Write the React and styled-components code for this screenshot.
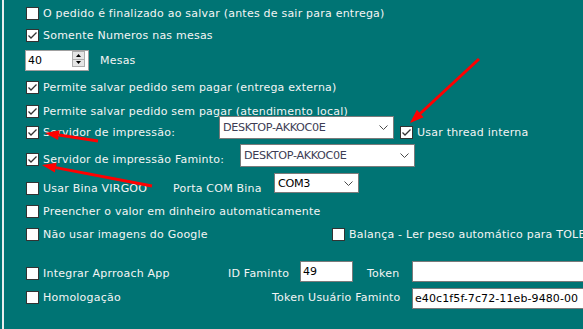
import React from "react";
import styled, { createGlobalStyle } from "styled-components";

const GlobalStyle = createGlobalStyle`
  html, body {
    margin: 0;
    padding: 0;
    background: #007474;
    overflow: hidden;
  }
  * {
    box-sizing: border-box;
  }
`;

const Page = styled.div`
  position: relative;
  width: 583px;
  height: 329px;
  padding-left: 2px;
  background: #007474;
  overflow: hidden;
  font-family: "DejaVu Sans", Verdana, sans-serif;
  font-size: 11px;
  color: #f4f4f4;
`;

const Panel = styled.div`
  height: 100%;
  border-left: 2px solid #e9eeee;
  padding-left: 22px;
  display: flex;
  flex-direction: column;
`;

const Row = styled.div`
  display: flex;
  align-items: center;
  height: ${(p) => p.$h}px;
  margin-top: ${(p) => p.$mt || 0}px;
  flex-shrink: 0;
`;

const Field = styled.label`
  display: flex;
  align-items: center;
  gap: 4px;
  width: ${(p) => (p.$w ? `${p.$w}px` : "auto")};
  flex-shrink: 0;
  white-space: nowrap;
  letter-spacing: 0.22px;
`;

const Box = styled.span`
  width: 13px;
  height: 13px;
  background: #ffffff;
  border: 1px solid #333333;
  display: inline-flex;
  align-items: center;
  justify-content: center;
  flex-shrink: 0;
`;

const Text = styled.span`
  width: ${(p) => (p.$w ? `${p.$w}px` : "auto")};
  flex-shrink: 0;
  white-space: nowrap;
  letter-spacing: 0.22px;
`;

const Combo = styled.div`
  width: ${(p) => p.$w}px;
  height: ${(p) => p.$h}px;
  margin-bottom: ${(p) => p.$mb || 0}px;
  background: #ffffff;
  border: 1px solid #7a7a7a;
  display: flex;
  align-items: center;
  justify-content: space-between;
  padding: 0 5px 0 3px;
  font-size: 11.2px;
  letter-spacing: -0.35px;
  color: ${(p) => p.$color || "#000"};
  flex-shrink: 0;
`;

const Input = styled.div`
  width: ${(p) => p.$w}px;
  height: 21px;
  margin-bottom: ${(p) => p.$mb || 0}px;
  background: #ffffff;
  border: 1px solid #7a7a7a;
  display: flex;
  align-items: center;
  padding-left: 2px;
  color: #000;
  flex-shrink: 0;
  white-space: nowrap;
  overflow: hidden;
  letter-spacing: 0.1px;
`;

const Spin = styled.div`
  width: 64px;
  height: 21px;
  margin-left: -1px;
  margin-right: 11px;
  background: #ffffff;
  border: 1px solid #a0a0a0;
  display: flex;
  align-items: flex-start;
  justify-content: space-between;
  padding: 0 3px 0 1px;
  color: #000;
`;

const SpinValue = styled.span`
  line-height: 19px;
  padding-left: 1px;
`;

const SpinButtons = styled.div`
  width: 13px;
  height: 16px;
  display: flex;
  flex-direction: column;
  border: 1px solid #adadad;
  background: #e5e5e5;
`;

const SpinBtn = styled.div`
  flex: 1;
  display: flex;
  align-items: center;
  justify-content: center;
  border-top: ${(p) => (p.$bottom ? "1px solid #adadad" : "none")};
`;

const Spacer = styled.div`
  width: ${(p) => p.$w}px;
  flex-shrink: 0;
`;

const Arrows = styled.svg`
  position: absolute;
  left: 0;
  top: 0;
  pointer-events: none;
`;

const Check = ({ on }) => (
  <Box>
    {on && (
      <svg width="11" height="11" viewBox="0 0 11 11">
        <polyline points="1.5,5.5 4,8 9.5,2.5" fill="none" stroke="#333" strokeWidth="1.3" />
      </svg>
    )}
  </Box>
);

const Chevron = () => (
  <svg width="9" height="5" viewBox="0 0 9 5">
    <polyline points="0.5,0.5 4.5,4.5 8.5,0.5" fill="none" stroke="#4a4a4a" strokeWidth="1" />
  </svg>
);

const CheckField = ({ on, label, w }) => (
  <Field $w={w}>
    <Check on={on} />
    <span>{label}</span>
  </Field>
);

const Arrow = ({ x1, y1, x2, y2 }) => {
  const dx = x2 - x1;
  const dy = y2 - y1;
  const len = Math.sqrt(dx * dx + dy * dy);
  const ux = dx / len;
  const uy = dy / len;
  const hl = 14;
  const hw = 5;
  const bx = x2 - ux * hl;
  const by = y2 - uy * hl;
  const pts = `${x2},${y2} ${bx - uy * hw},${by + ux * hw} ${bx + uy * hw},${by - ux * hw}`;
  return (
    <g>
      <line x1={x1} y1={y1} x2={bx} y2={by} stroke="#ff0000" strokeWidth="3" />
      <polygon points={pts} fill="#ff0000" />
    </g>
  );
};

export default function App() {
  return (
    <>
      <GlobalStyle />
      <Page>
        <Panel>
          <Row $h={22} $mt={2}>
            <CheckField label="O pedido é finalizado ao salvar (antes de sair para entrega)" />
          </Row>
          <Row $h={22}>
            <CheckField on label="Somente Numeros nas mesas" />
          </Row>
          <Row $h={29}>
            <Spin>
              <SpinValue>40</SpinValue>
              <SpinButtons>
                <SpinBtn>
                  <svg width="5" height="3" viewBox="0 0 5 3">
                    <polygon points="2.5,0 5,3 0,3" fill="#000" />
                  </svg>
                </SpinBtn>
                <SpinBtn $bottom>
                  <svg width="5" height="3" viewBox="0 0 5 3">
                    <polygon points="0,0 5,0 2.5,3" fill="#000" />
                  </svg>
                </SpinBtn>
              </SpinButtons>
            </Spin>
            <Text>Mesas</Text>
          </Row>
          <Row $h={25}>
            <CheckField on label="Permite salvar pedido sem pagar (entrega externa)" />
          </Row>
          <Row $h={22}>
            <CheckField on label="Permite salvar pedido sem pagar (atendimento local)" />
          </Row>
          <Row $h={20}>
            <CheckField on w={193} label="Servidor de impressão:" />
            <Combo $w={175} $h={23} $mb={9} $color="#3d3d55">
              <span>DESKTOP-AKKOC0E</span>
              <Chevron />
            </Combo>
            <Spacer $w={6} />
            <CheckField on label="Usar thread interna" />
          </Row>
          <Row $h={34}>
            <CheckField on w={214} label="Servidor de impressão Faminto:" />
            <Combo $w={175} $h={23} $mb={8} $color="#3d3d55">
              <span>DESKTOP-AKKOC0E</span>
              <Chevron />
            </Combo>
          </Row>
          <Row $h={24}>
            <CheckField w={147} label="Usar Bina VIRGOO" />
            <Text $w={101}>Porta COM Bina</Text>
            <Combo $w={85} $h={20} $mb={10}>
              <span>COM3</span>
              <Chevron />
            </Combo>
          </Row>
          <Row $h={22}>
            <CheckField label="Preencher o valor em dinheiro automaticamente" />
          </Row>
          <Row $h={24}>
            <CheckField w={306} label="Não usar imagens do Google" />
            <CheckField label="Balança - Ler peso automático para TOLEDO" />
          </Row>
          <Row $h={30} $mt={12}>
            <CheckField w={202} label="Integrar Aprroach App" />
            <Text $w={72}>ID Faminto</Text>
            <Input $w={53} $mb={3}>49</Input>
            <Spacer $w={14} />
            <Text $w={45}>Token</Text>
            <Input $w={200} $mb={3} />
          </Row>
          <Row $h={18}>
            <CheckField w={246} label="Homologação" />
            <Text $w={140}>Token Usuário Faminto</Text>
            <Input $w={200} $mb={-3}>e40c1f5f-7c72-11eb-9480-00</Input>
          </Row>
        </Panel>
        <Arrows width="583" height="329" viewBox="0 0 583 329">
          <Arrow x1={479} y1={59} x2={410} y2={123} />
          <Arrow x1={98} y1={141} x2={45} y2={133} />
          <Arrow x1={152} y1={186} x2={42} y2={165} />
        </Arrows>
      </Page>
    </>
  );
}
